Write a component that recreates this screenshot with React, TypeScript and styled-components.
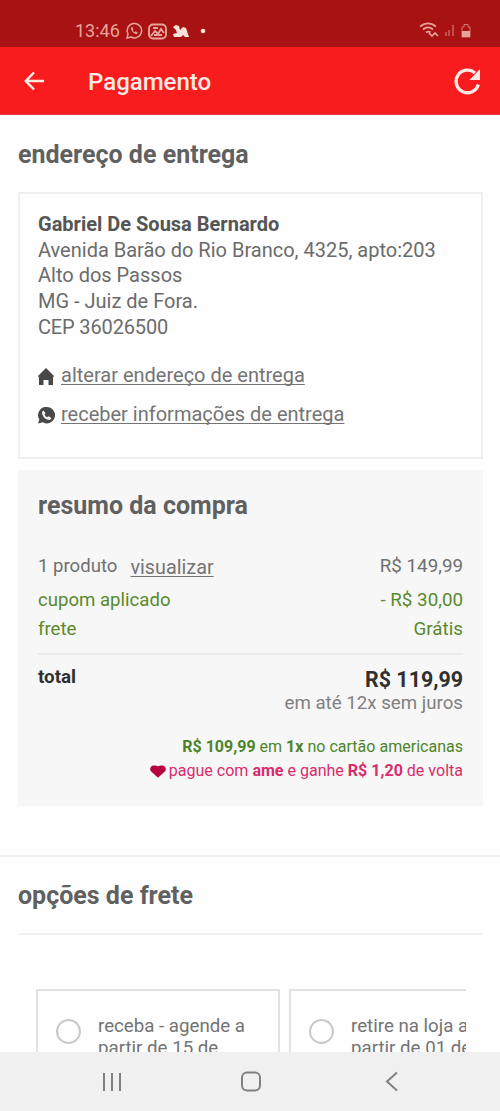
import React from 'react';
import styled, { createGlobalStyle } from 'styled-components';

const Global = createGlobalStyle`
  * { box-sizing: border-box; }
  body { margin: 0; background: #fefefe; }
`;

const Screen = styled.div`
  width: 500px;
  height: 1111px;
  display: flex;
  flex-direction: column;
  overflow: hidden;
  background: #fefefe;
  color: #666;
  font-family: Roboto, 'Liberation Sans', sans-serif;
`;

const StatusBar = styled.header`
  flex: none;
  height: 47px;
  padding: 15px 27px 0 75px;
  display: flex;
  align-items: center;
  justify-content: space-between;
  background: #a81212;
  color: #e8a39b;
`;

const StatusGroup = styled.div<{ $gap: number }>`
  display: flex;
  align-items: center;
  gap: ${p => p.$gap}px;
`;

const Clock = styled.span`
  font-size: 18px;
  line-height: 20px;
`;

const AppBar = styled.div`
  flex: none;
  height: 68px;
  padding: 1px 19px 0 24px;
  display: flex;
  align-items: center;
  background: #f81c1e;
  color: #ffe9e4;
  border-bottom: 1px solid #e8434a;
`;

const AppTitle = styled.h1`
  flex: 1;
  margin: 1px 0 0 43px;
  font-size: 24px;
  font-weight: 500;
  line-height: 30px;
`;

const Content = styled.main`
  flex: 1;
  min-height: 0;
  overflow: hidden;
`;

const Heading = styled.h2<{ $top: number }>`
  margin: 0;
  padding: ${p => p.$top}px 0 0 18px;
  font-size: 25px;
  font-weight: 700;
  line-height: 30px;
  color: #606060;
`;

const AddressCard = styled.section`
  height: 267px;
  margin: 22px 17px 0 18px;
  padding: 18px;
  border: 2px solid #f0f0f0;
  font-size: 20px;
  line-height: 25.7px;
`;

const AddressLine = styled.div<{ $strong?: boolean; $spacing?: number }>`
  white-space: nowrap;
  font-weight: ${p => (p.$strong ? 700 : 400)};
  color: ${p => (p.$strong ? '#555' : '#6b6b6b')};
  letter-spacing: ${p => p.$spacing ?? 0}px;
`;

const LinkRow = styled.div<{ $top: number }>`
  display: flex;
  align-items: center;
  height: 26px;
  margin-top: ${p => p.$top}px;
  color: #484848;
`;

const LinkIcon = styled.span`
  display: flex;
  width: 23px;
  padding-top: 2px;
`;

const Link = styled.a`
  color: #747474;
  white-space: nowrap;
  text-decoration: underline;
  text-decoration-skip-ink: none;
  text-underline-offset: 2px;
  text-decoration-thickness: 1px;
`;

const Summary = styled.section`
  height: 336px;
  margin: 11px 17px 0 18px;
  padding: 21px 20px 0;
  background: #f7f7f7;
`;

const SummaryTitle = styled.h2`
  margin: 0 0 30px;
  font-size: 25px;
  font-weight: 700;
  line-height: 30px;
  color: #606060;
`;

const SummaryRow = styled.div<{ $height: number; $green?: boolean }>`
  display: flex;
  justify-content: space-between;
  height: ${p => p.$height}px;
  font-size: 18.6px;
  line-height: 30px;
  color: ${p => (p.$green ? '#578a2c' : '#707070')};
`;

const ProductLabel = styled.span`
  display: flex;
  gap: 13px;
`;

const ViewLink = styled(Link)`
  font-size: 19.8px;
  line-height: 33px;
`;

const Amount = styled.span`
  font-size: 18.8px;
`;

const TotalRow = styled.div`
  display: flex;
  justify-content: space-between;
  height: 38px;
  padding-top: 10px;
  border-top: 2px solid #eaecec;
  color: #303030;
  font-weight: 700;
  line-height: 28px;
`;

const TotalLabel = styled.span`
  font-size: 18.8px;
  line-height: 25px;
`;

const TotalValue = styled.span`
  font-size: 21.4px;
  line-height: 29px;
`;

const Installments = styled.div`
  height: 24px;
  text-align: right;
  font-size: 18.7px;
  line-height: 24px;
  color: #808080;
`;

const Promo = styled.div<{ $top: number; $color: string }>`
  display: flex;
  align-items: center;
  justify-content: flex-end;
  gap: 3px;
  height: 24px;
  margin-top: ${p => p.$top}px;
  font-size: 16.05px;
  line-height: 24px;
  white-space: nowrap;
  color: ${p => p.$color};
`;

const Shipping = styled.section`
  margin-top: 49px;
  border-top: 2px solid #f0f0f0;
`;

const Rule = styled.hr`
  height: 2px;
  margin: 22px 17px 0 18px;
  border: 0;
  background: #f1f1f1;
`;

const Options = styled.div`
  display: flex;
  gap: 9px;
  width: 430px;
  margin: 54px 0 0 36px;
  overflow: hidden;
`;

const Option = styled.label`
  flex: none;
  width: 244px;
  height: 130px;
  padding: 24px 0 0 18px;
  display: flex;
  gap: 17px;
  border: 2px solid #e2e2e2;
  font-size: 18.7px;
  line-height: 22px;
  color: #747474;
  white-space: nowrap;
`;

const Radio = styled.span`
  flex: none;
  width: 25px;
  height: 25px;
  margin-top: 4px;
  border: 2px solid #c9c9c9;
  border-radius: 50%;
`;

const NavBar = styled.nav`
  flex: none;
  height: 59px;
  padding: 0 101px;
  display: grid;
  grid-template-columns: 1fr 21px 1fr;
  align-items: center;
  justify-items: start;
  column-gap: 0;
  background: #f0f0f0;
  color: #808080;

  & > :last-child { justify-self: end; }
`;

const WhatsappOutline = () => (
  <svg width="18" height="18" viewBox="0 0 18 18" fill="none" stroke="currentColor" strokeWidth="1.5">
    <path d="M2 16l1-4a7.2 7.2 0 1 1 3 3z" />
    <path d="M6 5.5c0 4 3 6.500 6 6.500l.6-1.800-2-1-1 1c-1-.5-1.600-1.200-2-2l.8-1L7.500 5z" fill="currentColor" stroke="none" />
  </svg>
);

const PhotoIcon = () => (
  <svg width="19" height="17" viewBox="0 0 19 17" fill="none" stroke="currentColor" strokeWidth="1.9">
    <rect x="1" y="1.500" width="17" height="14" rx="4" />
    <path d="M3 13l4-5 3 3 3-5 3 4M5 5h5M6 12h8" />
  </svg>
);

const AppsIcon = () => (
  <svg width="18" height="16" viewBox="0 0 18 16" fill="#ffe1d9">
    <path d="M1 4l3-2 3 1 1 4 3-3 3 1 1 3 2 6h-4l-2-2-2 2H2l-1-3 4-1-1-3z" />
  </svg>
);

const DotIcon = () => (
  <svg width="16" height="6" viewBox="0 0 16 6" fill="#ffe1d9">
    <circle cx="8" cy="3" r="2.300" />
  </svg>
);

const SignalIcons = () => (
  <svg width="54" height="18" viewBox="0 0 54 18" fill="none" stroke="currentColor" strokeWidth="1.700">
    <path d="M1 4.500c5-4 11-4 16 0M4 7.500c3-2.500 7-2.500 10 0M7 10.500c1.500-1.300 3-1.300 4.500 0" />
    <path d="M10 11l3 3 3-3 3 3" />
    <path d="M27 14v-4M30 14V8M34 14V3" opacity=".5" />
    <path d="M43 5h2V2.500h4V5h2v10h-8z" strokeWidth="1" opacity=".7" />
    <path d="M43 9h8v6h-8z" fill="currentColor" stroke="none" />
  </svg>
);

const BackArrow = () => (
  <svg width="21" height="20" viewBox="0 0 21 20" fill="none" stroke="currentColor" strokeWidth="2.500">
    <path d="M20 10H2M10 1.500L1.800 10l8.200 8.500" />
  </svg>
);

const RefreshIcon = () => (
  <svg width="28" height="28" viewBox="0 0 28 28" fill="none" stroke="currentColor" strokeWidth="3.300">
    <path d="M25.300 17.500A11.300 11.300 0 1 1 22 6" />
    <path d="M27 2v11H16.500z" fill="currentColor" stroke="none" />
  </svg>
);

const HomeIcon = () => (
  <svg width="16" height="17" viewBox="0 0 16 17" fill="currentColor">
    <path d="M8 0l8 8-1 1.500V17h-4.500v-5h-5v5H1V9.500L0 8z" />
  </svg>
);

const WhatsappIcon = () => (
  <svg width="17" height="17" viewBox="0 0 17 17" fill="currentColor">
    <path d="M8.700 0a8.200 8.200 0 1 1-4 15.300L0 16.500l1.300-4A8.200 8.200 0 0 1 8.700 0z" />
    <path d="M5.500 3.500L4 5c0 5 4 8 8 8l1.500-2-3-1.800-1.300 1.100C7.800 9.700 7 8.700 6.500 7.500l1-1.200z" fill="#f5f5f5" />
  </svg>
);

const HeartIcon = () => (
  <svg width="16" height="13" viewBox="0 0 16 13" fill="#b8003f">
    <path d="M8 12.800L.7 6C-.6 3.500 1 .5 4 .5c1.600 0 3 .2 4 .9 1-.7 2.400-.9 4-.9 3 0 4.600 3 3.300 5.500z" />
  </svg>
);

const RecentsIcon = () => (
  <svg width="22" height="20" viewBox="0 0 22 20" stroke="currentColor" strokeWidth="2">
    <path d="M3 1v18M11 1v18M19 1v18" />
  </svg>
);

const HomeButtonIcon = () => (
  <svg width="21" height="21" viewBox="0 0 21 21" fill="none" stroke="currentColor" strokeWidth="2">
    <rect x="2" y="1.500" width="18" height="18" rx="5" />
  </svg>
);

const BackIcon = () => (
  <svg width="14" height="21" viewBox="0 0 14 21" fill="none" stroke="currentColor" strokeWidth="2">
    <path d="M12 1.500L2 10.500l10 9" />
  </svg>
);

export default function App() {
  return (
    <Screen>
      <Global />
      <StatusBar>
        <StatusGroup $gap={5}>
          <Clock>13:46</Clock>
          <WhatsappOutline />
          <PhotoIcon />
          <AppsIcon />
          <DotIcon />
        </StatusGroup>
        <SignalIcons />
      </StatusBar>
      <AppBar>
        <BackArrow />
        <AppTitle>Pagamento</AppTitle>
        <RefreshIcon />
      </AppBar>
      <Content>
        <Heading $top={25}>endereço de entrega</Heading>
        <AddressCard>
          <AddressLine $strong>Gabriel De Sousa Bernardo</AddressLine>
          <AddressLine>Avenida Barão do Rio Branco, 4325, apto:203</AddressLine>
          <AddressLine>Alto dos Passos</AddressLine>
          <AddressLine>MG - Juiz de Fora.</AddressLine>
          <AddressLine $spacing={-0.15}>CEP 36026500</AddressLine>
          <LinkRow $top={22}>
            <LinkIcon><HomeIcon /></LinkIcon>
            <Link>alterar endereço de entrega</Link>
          </LinkRow>
          <LinkRow $top={13}>
            <LinkIcon><WhatsappIcon /></LinkIcon>
            <Link>receber informações de entrega</Link>
          </LinkRow>
        </AddressCard>
        <Summary>
          <SummaryTitle>resumo da compra</SummaryTitle>
          <SummaryRow $height={34}>
            <ProductLabel>
              1 produto
              <ViewLink>visualizar</ViewLink>
            </ProductLabel>
            <Amount>R$ 149,99</Amount>
          </SummaryRow>
          <SummaryRow $height={29} $green>
            <span>cupom aplicado</span>
            <Amount>- R$ 30,00</Amount>
          </SummaryRow>
          <SummaryRow $height={39} $green>
            <span>frete</span>
            <Amount>Grátis</Amount>
          </SummaryRow>
          <TotalRow>
            <TotalLabel>total</TotalLabel>
            <TotalValue>R$ 119,99</TotalValue>
          </TotalRow>
          <Installments>em até 12x sem juros</Installments>
          <Promo $top={20} $color="#4c852b">
            <span><b>R$ 109,99</b> em <b>1x</b> no cartão americanas</span>
          </Promo>
          <Promo $top={0} $color="#d72d6c">
            <HeartIcon />
            <span>pague com <b>ame</b> e ganhe <b>R$ 1,20</b> de volta</span>
          </Promo>
        </Summary>
        <Shipping>
          <Heading $top={24}>opções de frete</Heading>
          <Rule />
          <Options>
            <Option>
              <Radio />
              <span>receba - agende a<br />partir de 15 de</span>
            </Option>
            <Option>
              <Radio />
              <span>retire na loja a<br />partir de 01 de</span>
            </Option>
          </Options>
        </Shipping>
      </Content>
      <NavBar>
        <RecentsIcon />
        <HomeButtonIcon />
        <BackIcon />
      </NavBar>
    </Screen>
  );
}
